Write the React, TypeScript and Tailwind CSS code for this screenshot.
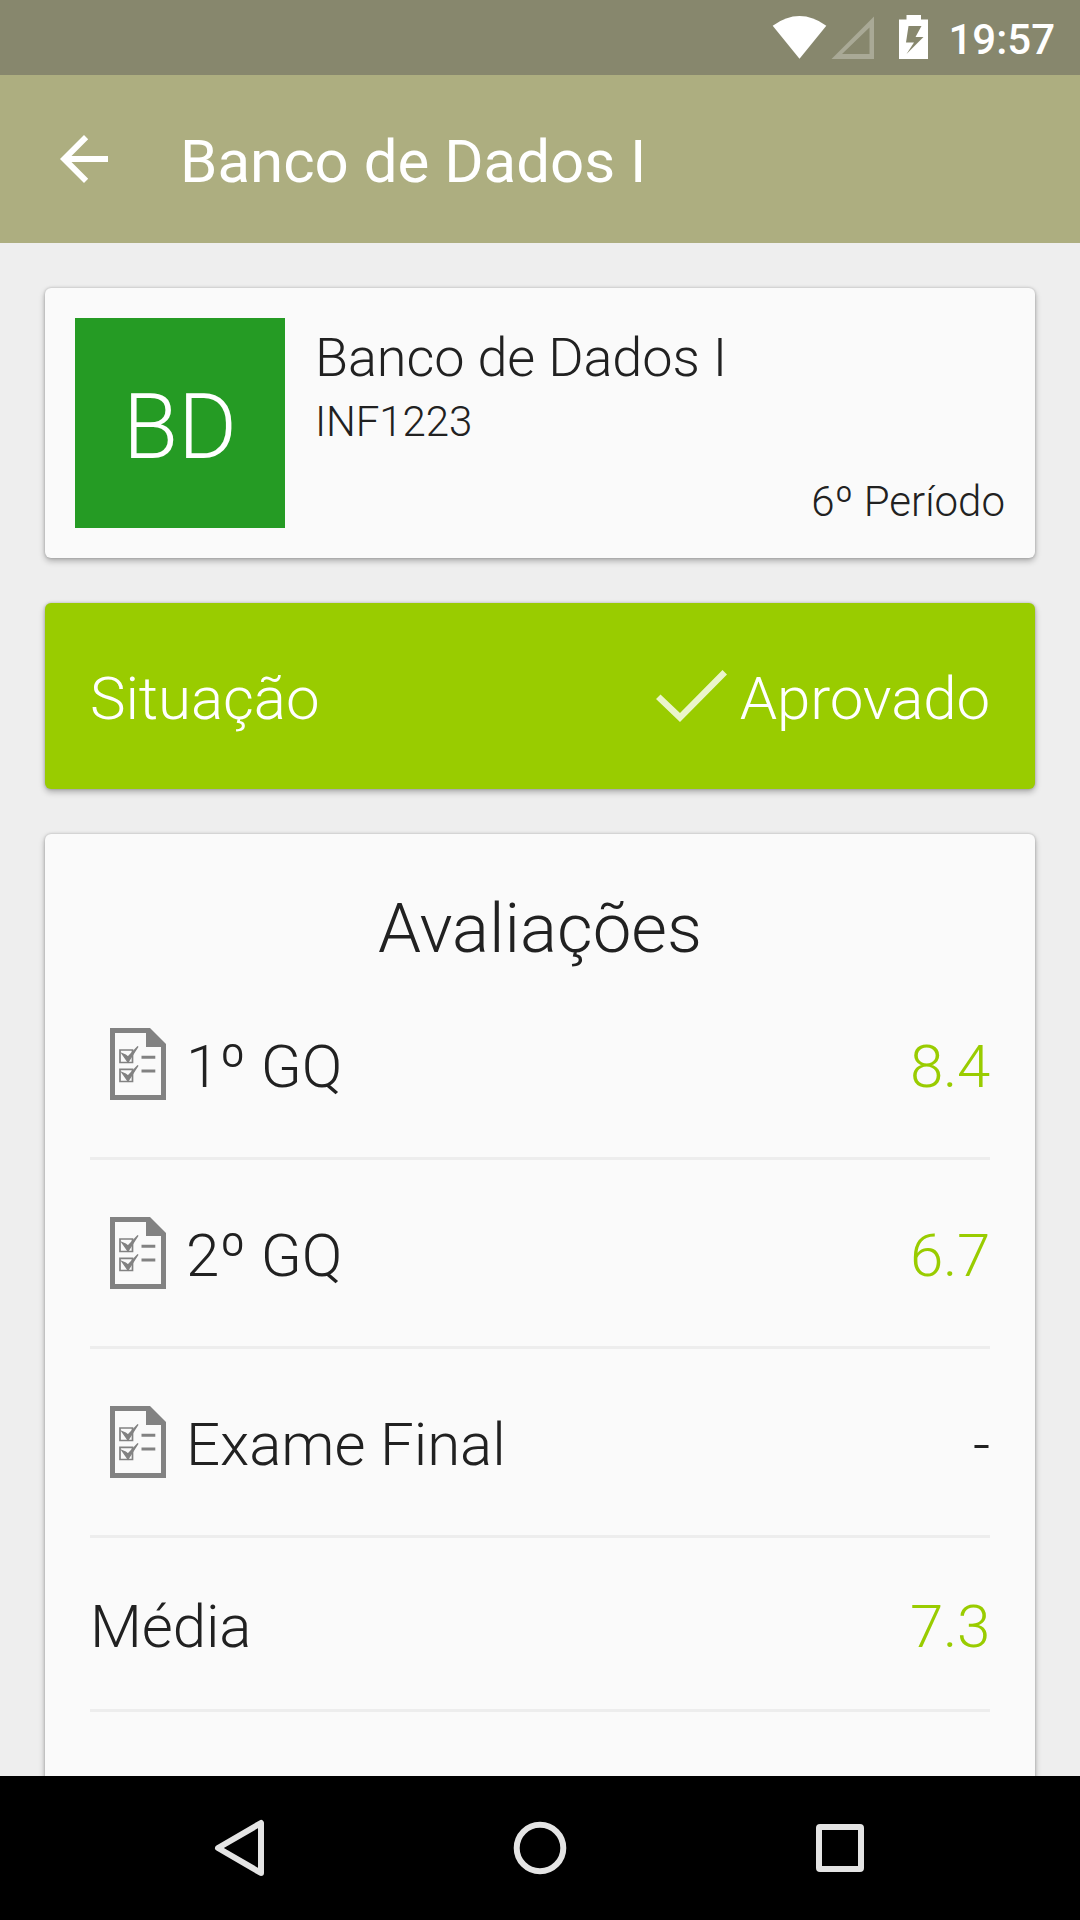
import type { ReactNode } from "react";

function StatusBar() {
  return (
    <div className="h-[75px] shrink-0 bg-[#87876d] flex items-start justify-end pr-[25px]">
      <div className="flex w-[287px] items-start justify-between">
        <svg className="w-[168px] h-[75px] shrink-0" viewBox="768 0 168 75">
          <path d="M772.7 25.7Q799.5 6.500 826.300 25.700L799.500 58.700Z" fill="#fff" />
          <path d="M874 16.500V59H831.500ZM869.500 27.500L842 54H869.500Z" fill="#a9a996" fillRule="evenodd" />
          <path d="M906.500 15H921V19.500H928V59H899V19.500H906.500ZM908.500 26L906 42.500H914L906.500 54L923.500 37H915.500L921.500 26Z" fill="#fff" fillRule="evenodd" />
        </svg>
        <div className="mt-[15px] text-[42px] leading-[50px] font-medium text-white">19:57</div>
      </div>
    </div>
  );
}

function AppBar() {
  return (
    <header className="h-[168px] shrink-0 bg-[#adae80] flex items-center">
      <svg className="w-[48px] h-[48px] ml-[60px] shrink-0" viewBox="0 0 48 48">
        <path d="M48 21V27H11.500L28.200 43.700L24 48L0 24L24 0L28.200 4.300L11.500 21Z" fill="#fff" />
      </svg>
      <h1 className="ml-[72px] pt-[5px] text-[60px] leading-[70px] font-normal text-white">Banco de Dados I</h1>
    </header>
  );
}

function Card({ className, children }: { className: string; children: ReactNode }) {
  return (
    <section className={"rounded-[6px] shadow-[0_0_3px_rgba(0,0,0,0.22),0_3px_6px_rgba(0,0,0,0.28)] " + className}>
      {children}
    </section>
  );
}

function ExamIcon() {
  return (
    <svg className="w-[56px] h-[72px] shrink-0" viewBox="0 0 56 72" fill="none" stroke="#828282">
      <path d="M0 0H40L56 16V72H0ZM5 5V67H51V19H36V5Z" fill="#828282" stroke="none" fillRule="evenodd" />
      <path d="M10 22H22.500V34.500H10ZM10 41.300H22.500V53.500H10Z" strokeWidth="1.700" />
      <path d="M12 25.500L15.500 27L18 29L28 18.500L18 34ZM12 44.500L15.500 46L18 48L28 37.500L18 53Z" fill="#828282" strokeWidth="1.300" />
      <path d="M31.500 29.300H45.300M31.500 43H45.300" strokeWidth="3" />
    </svg>
  );
}

function GradeRow({ label, grade, good }: { label: string; grade: string; good: boolean }) {
  return (
    <div className="h-[189px] border-b-[3px] border-[#ededed] flex items-center">
      <div className="ml-[20px]"><ExamIcon /></div>
      <span className="ml-[20px] pt-[5px] tracking-[-0.05px]">{label}</span>
      <span className={"ml-auto pt-[5px] tracking-[-0.3px] " + (good ? "text-[#99cc00]" : "")}>{grade}</span>
    </div>
  );
}

function NavBar() {
  return (
    <nav className="h-[144px] shrink-0 bg-black flex items-center justify-center">
      <svg className="w-[1080px] h-[144px]" viewBox="0 0 1080 144" fill="none" stroke="#e4e4e4" strokeWidth="6" strokeLinejoin="round">
        <path d="M218 72L261 47V97Z" />
        <circle cx="540" cy="72" r="23.300" />
        <rect x="819" y="51" width="42" height="42" rx="1" />
      </svg>
    </nav>
  );
}

export default function App() {
  return (
    <div className="w-[1080px] h-[1920px] overflow-hidden flex flex-col bg-[#eeeeee] font-['Roboto',sans-serif] font-light text-[#212121]">
      <StatusBar />
      <AppBar />
      <main className="flex-1 min-h-0 overflow-hidden px-[45px] pt-[45px] flex flex-col gap-[45px]">
        <Card className="h-[270px] shrink-0 bg-[#fafafa] p-[30px] flex">
          <div className="size-[210px] bg-[#259b24] text-white text-[90px] leading-[105px] pt-[8px] flex items-center justify-center">BD</div>
          <div className="flex-1 ml-[30px] pt-[8px] flex flex-col">
            <h2 className="text-[54px] leading-[63px] tracking-[-0.1px]">Banco de Dados I</h2>
            <p className="mt-[8px] text-[42px] leading-[50px] tracking-[-0.1px]">INF1223</p>
            <p className="mt-auto mb-[1px] self-end text-[42px] leading-[50px]">6º Período</p>
          </div>
        </Card>
        <Card className="h-[186px] shrink-0 bg-[#99cc00] px-[45px] flex items-center text-white text-[60px] leading-[70px] tracking-[-0.1px]">
          <span className="pt-[5px]">Situação</span>
          <svg className="ml-auto w-[71px] h-[52px] mt-[-1px]" viewBox="0 0 71 52">
            <path d="M4.500 24.500L0 29L24 52L71 4.500L66.500 0L24 43Z" fill="#ebf5cc" />
          </svg>
          <span className="ml-[13px] pt-[5px]">Aprovado</span>
        </Card>
        <Card className="h-[1000px] shrink-0 bg-[#fafafa] px-[45px] text-[60px] leading-[70px]">
          <h2 className="h-[137px] pt-[55px] text-center text-[69px] leading-[80px]">Avaliações</h2>
          <GradeRow label="1º GQ" grade="8.4" good />
          <GradeRow label="2º GQ" grade="6.7" good />
          <GradeRow label="Exame Final" grade="-" good={false} />
          <div className="h-[174px] border-b-[3px] border-[#ededed] flex items-center justify-between">
            <span className="pt-[7px] tracking-[-0.1px]">Média</span>
            <span className="pt-[7px] tracking-[-0.3px] text-[#99cc00]">7.3</span>
          </div>
        </Card>
      </main>
      <NavBar />
    </div>
  );
}
